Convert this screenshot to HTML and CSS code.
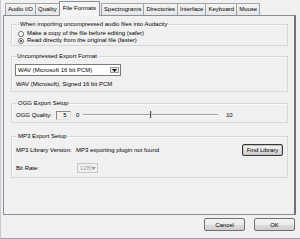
FILE: index.html
```html
<!DOCTYPE html>
<html>
<head>
<meta charset="utf-8">
<link rel="stylesheet" href="styles.css">
</head>
<body>
<div class="window">
  <div class="tabs">
    <div class="tab">Audio I/O</div>
    <div class="tab">Quality</div>
    <div class="tab active">File Formats</div>
    <div class="tab">Spectrograms</div>
    <div class="tab">Directories</div>
    <div class="tab">Interface</div>
    <div class="tab">Keyboard</div>
    <div class="tab">Mouse</div>
  </div>
  <div class="panel">
    <fieldset class="group g1">
      <legend>When importing uncompressed audio files into Audacity</legend>
      <div class="radio"><span class="dot"></span>Make a copy of the file before editing (safer)</div>
      <div class="radio"><span class="dot checked"></span>Read directly from the original file (faster)</div>
    </fieldset>
    <fieldset class="group g2">
      <legend>Uncompressed Export Format</legend>
      <div class="select"><span class="select-text">WAV (Microsoft 16 bit PCM)</span><span class="arrow"><svg width="5" height="3" viewBox="0 0 5 3"><path d="M0 0H5L2.5 3Z" fill="#000"/></svg></span></div>
      <div class="desc">WAV (Microsoft), Signed 16 bit PCM</div>
    </fieldset>
    <fieldset class="group g3">
      <legend>OGG Export Setup</legend>
      <div class="row">
        <span class="lbl ogg">OGG Quality:</span>
        <span class="num">5</span>
        <span class="min">0</span>
        <span class="slider"><span class="track"></span><span class="thumb"></span></span>
        <span class="max">10</span>
      </div>
    </fieldset>
    <fieldset class="group g4">
      <legend>MP3 Export Setup</legend>
      <div class="row r1">
        <span class="lbl">MP3 Library Version:</span>
        <span class="val">MP3 exporting plugin not found</span>
        <span class="btn find">Find Library</span>
      </div>
      <div class="row r2">
        <span class="lbl">Bit Rate:</span>
        <span class="combo"><span class="combo-text">128</span><span class="carrow"><svg width="5" height="3" viewBox="0 0 5 3"><path d="M0 0H5L2.5 3Z" fill="#a0a0a0"/></svg></span></span>
      </div>
    </fieldset>
  </div>
  <div class="buttons">
    <span class="btn dlg">Cancel</span>
    <span class="btn dlg">OK</span>
  </div>
</div>
</body>
</html>
```

FILE: styles.css
```css
* { box-sizing: border-box; }
html, body { margin: 0; padding: 0; }
body {
  width: 300px;
  height: 239px;
  background: #f0f0f0;
  font-family: "Liberation Sans", Arial, sans-serif;
  font-size: 6px;
  color: #000;
  overflow: hidden;
}
.window {
  height: 239px;
  border-left: 1px solid #c4cbd2;
  border-bottom: 1px solid #9aa3ac;
  padding: 0 4px 0 2px;
  display: flex;
  flex-direction: column;
}
.tabs {
  display: flex;
  align-items: flex-end;
  height: 15px;
  padding-left: 2px;
}
.tab {
  height: 12px;
  line-height: 11px;
  padding: 0 2px;
  border: 1px solid #a0a4ab;
  border-bottom: none;
  margin-right: -1px;
  background: linear-gradient(#f4f4f4, #e6e6e6);
  white-space: nowrap;
}
.tab.active {
  height: 15px;
  line-height: 13px;
  padding: 0 3px;
  background: #f4f4f4;
  margin: 0 1px -1px 0;
  position: relative;
  z-index: 1;
  border-color: #8a8e96;
}
.panel {
  height: 200px;
  border: 1px solid #8a8e96;
  border-right: 2px solid #6d7077;
  background: #f0f0f0;
  padding: 4px 6px 0 7px;
}
.group {
  margin: 0;
  padding: 0;
  border: 1px solid #d4d8dc;
  box-shadow: inset 1px 1px 0 #fafafa;
  min-width: 0;
}
.group legend {
  font-size: 6px;
  line-height: 8px;
  padding: 0 1px;
  margin-left: 1px;
}
.g1 { padding: 2px 0 1px 6px; }
.g2 { margin-top: 6px; padding: 4px 0 3px 3px; }
.g3 { margin-top: 7px; padding: 3px 0 2px 4px; }
.g4 { margin-top: 9px; padding: 4px 0 4px 4px; }

.radio {
  display: flex;
  align-items: center;
  height: 7px;
  line-height: 7px;
}
.dot {
  width: 6px;
  height: 6px;
  border-radius: 50%;
  border: 1px solid #6f6f6f;
  background: #fff;
  margin-right: 3px;
  flex: none;
  position: relative;
}
.dot.checked::after {
  content: "";
  position: absolute;
  left: 1px;
  top: 1px;
  width: 2px;
  height: 2px;
  border-radius: 50%;
  background: #222;
}
.select {
  width: 106px;
  height: 12px;
  border: 1px solid #7a7a7a;
  background: #fff;
  display: flex;
  align-items: center;
  justify-content: space-between;
  padding: 0 1px 0 2px;
}
.select-text { line-height: 8px; }
.arrow {
  width: 9px;
  height: 6px;
  border: 1px solid #9a9a9a;
  background: linear-gradient(#f6f6f6, #dcdcdc);
  display: flex;
  align-items: center;
  justify-content: center;
}
.desc {
  margin-top: 4px;
  margin-left: 1px;
  line-height: 8px;
}
.row {
  display: flex;
  align-items: center;
}
.g3 .row { height: 10px; }
.lbl { width: 60px; flex: none; }
.lbl.ogg { width: 40px; }
.num {
  width: 15px;
  height: 9px;
  border: 1px solid #8a8a8a;
  border-right-color: #e0e0e0;
  border-bottom-color: #e0e0e0;
  text-align: center;
  line-height: 7px;
  padding-left: 3px;
}
.min { margin-left: 5px; width: 7px; }
.slider {
  position: relative;
  width: 135px;
  height: 8px;
  display: flex;
  align-items: center;
}
.track {
  width: 100%;
  height: 2px;
  border-top: 1px solid #a0a0a0;
  border-bottom: 1px solid #ffffff;
}
.thumb {
  position: absolute;
  left: 67px;
  top: 0;
  width: 2px;
  height: 7px;
  border-left: 1px solid #505050;
  border-right: 1px solid #d0d0d0;
}
.max { margin-left: 8px; }
.r1 { height: 12px; }
.val { flex: 1; }
.btn {
  display: flex;
  align-items: center;
  justify-content: center;
  border: 1px solid #707070;
  border-radius: 2px;
  background: linear-gradient(#f2f2f2 0%, #ebebeb 50%, #dddddd 51%, #cfcfcf 100%);
}
.find {
  width: 41px;
  height: 12px;
  margin-right: 4px;
  border: 1px solid #3a3a3a;
  box-shadow: inset 0 0 0 1px #c0c0c0;
}
.r2 { margin-top: 7px; height: 10px; }
.lbl + .combo { margin-left: 1px; }
.combo {
  width: 21px;
  height: 10px;
  border: 1px solid #c8c8c8;
  display: flex;
  align-items: center;
  justify-content: space-between;
  padding: 0 1px 0 2px;
  color: #a0a0a0;
  background: #f0f0f0;
}
.carrow {
  width: 7px;
  height: 6px;
  display: flex;
  align-items: center;
  justify-content: center;
  border-left: 1px solid #dcdcdc;
}
.buttons {
  display: flex;
  justify-content: flex-end;
  gap: 9px;
  padding-top: 3px;
  padding-right: 1px;
}
.dlg {
  width: 41px;
  height: 13px;
}
```
